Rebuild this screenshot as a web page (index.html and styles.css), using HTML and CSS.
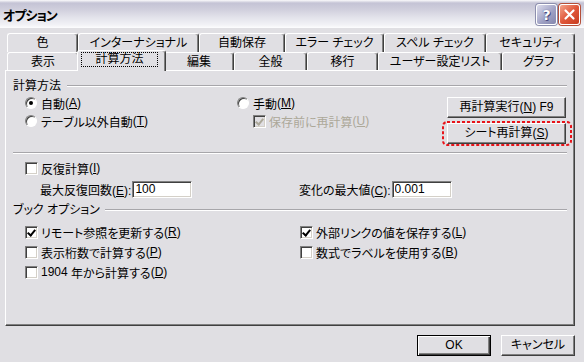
FILE: index.html
```html
<!DOCTYPE html>
<html lang="ja">
<head>
    <meta charset="UTF-8">
    <title>オプション</title>
    <link rel="stylesheet" href="styles.css">
</head>
<body>
    <div class="window">
        <div class="titlebar">
            <div class="title">オプション</div>
            <div class="ctrl help">?</div>
            <div class="ctrl close">
                <svg width="13" height="13" viewBox="0 0 13 13"><path d="M2.5 2.5 L10.5 10.5 M10.5 2.5 L2.5 10.5" stroke="#fff" stroke-width="2.2" stroke-linecap="round"/></svg>
            </div>
        </div>

        <div class="content">
            <!-- タブ -->
            <div class="tabs">
                <div class="tabrow back">
                    <div class="tab">色</div>
                    <div class="tab">インターナショナル</div>
                    <div class="tab">自動保存</div>
                    <div class="tab">エラー チェック</div>
                    <div class="tab">スペル チェック</div>
                    <div class="tab">セキュリティ</div>
                </div>
                <div class="tabrow front">
                    <div class="tab">表示</div>
                    <div class="tab active"><span class="focus">計算方法</span></div>
                    <div class="tab">編集</div>
                    <div class="tab">全般</div>
                    <div class="tab">移行</div>
                    <div class="tab">ユーザー設定リスト</div>
                    <div class="tab">グラフ</div>
                </div>
            </div>

            <div class="panel">
                <div class="legend"><span>計算方法</span></div>
                <div class="calc">
                    <div class="col col-auto">
                        <div class="opt"><span class="radio on"></span>自動<span class="key" lang="en">(<u>A</u>)</span></div>
                        <div class="opt"><span class="radio"></span>テーブル以外自動<span class="key" lang="en">(<u>T</u>)</span></div>
                    </div>
                    <div class="col col-manual">
                        <div class="opt"><span class="radio"></span>手動<span class="key" lang="en">(<u>M</u>)</span></div>
                        <div class="opt sub disabled"><span class="box checked"></span>保存前に再計算<span class="key" lang="en">(<u>U</u>)</span></div>
                    </div>
                    <div class="col col-btns">
                        <button class="btn wide">再計算実行<span class="key" lang="en">(<u>N</u>) F9</span></button>
                        <div class="marked">
                            <button class="btn wide">シート再計算<span class="key" lang="en">(<u>S</u>)</span></button>
                            <svg class="mark" width="130" height="25" viewBox="0 0 130 25"><rect x="1" y="1" width="128" height="23" rx="4" fill="none" stroke="#e8141a" stroke-width="2" stroke-dasharray="3 2"/></svg>
                        </div>
                    </div>
                </div>

                <div class="sep"></div>

                <div class="opt iter-check"><span class="box"></span>反復計算<span class="key" lang="en">(<u>I</u>)</span></div>
                <div class="iter">
                    <div class="field first"><label>最大反復回数<span class="key" lang="en">(<u>E</u>):</span></label><input class="input" type="text" value="100"></div>
                    <div class="field"><label>変化の最大値<span class="key" lang="en">(<u>C</u>):</span></label><input class="input" type="text" value="0.001"></div>
                </div>

                <div class="legend book-legend"><span>ブック オプション</span></div>
                <div class="book">
                    <div class="opt"><span class="box checked"></span>リモート参照を更新する<span class="key" lang="en">(<u>R</u>)</span></div>
                    <div class="opt"><span class="box checked"></span>外部リンクの値を保存する<span class="key" lang="en">(<u>L</u>)</span></div>
                    <div class="opt"><span class="box"></span>表示桁数で計算する<span class="key" lang="en">(<u>P</u>)</span></div>
                    <div class="opt"><span class="box"></span>数式でラベルを使用する<span class="key" lang="en">(<u>B</u>)</span></div>
                    <div class="opt"><span class="box"></span><span class="key" lang="en">1904</span>&nbsp;年から計算する<span class="key" lang="en">(<u>D</u>)</span></div>
                </div>
            </div>

            <div class="footer">
                <button class="btn default" lang="en">OK</button>
                <button class="btn">キャンセル</button>
            </div>
        </div>
    </div>
</body>
</html>
```

FILE: styles.css
```css
/* 全体 */
* {
    box-sizing: border-box;
}

body {
    margin: 0;
    font-family: "Liberation Sans", "Noto Sans CJK JP", sans-serif;
    font-size: 12px;
    font-feature-settings: "palt";
    text-autospace: no-autospace;
    color: #000;
    background: #e0dfe3;
}

.key {
    font-family: "Liberation Sans", sans-serif;
    font-feature-settings: normal;
}

.window {
    width: 584px;
    height: 362px;
    background: #e0dfe3;
    overflow: hidden;
}

/* タイトルバー */
.titlebar {
    height: 28px;
    display: flex;
    align-items: center;
    padding: 0 4px 0 3px;
    background: linear-gradient(to bottom, #fbfbfc 0, #c4c3d5 3px, #cfcedc 9px, #e2e2ea 17px, #f2f2f6 25px, #fdfdfe 28px);
}

.title {
    flex: 1;
    font-weight: bold;
    font-size: 13px;
    letter-spacing: -1px;
    padding-top: 1px;
}

.ctrl {
    width: 21px;
    height: 21px;
    margin-left: 2px;
    margin-top: 1px;
    border: 1px solid #fff;
    border-radius: 3px;
    box-shadow: 0 0 0 1px #8d8fae;
    display: flex;
    align-items: center;
    justify-content: center;
}

.help {
    background: linear-gradient(135deg, #dcdcec, #9c9ec2 60%, #8587ad);
    color: #fff;
    font-family: "DejaVu Sans", sans-serif;
    font-weight: bold;
    font-size: 14px;
    text-shadow: 0 0 1px #3c3f76, 1px 1px 0 #4b4e84;
}

.close {
    background: linear-gradient(135deg, #f3a58c, #e0573a 50%, #c73c1f);
    box-shadow: 0 0 0 1px #b4503a;
}

/* 本体 */
.content {
    padding: 5px 9px 0 5px;
}

.tabs {
    margin-left: 2px;
}

.tabrow {
    display: grid;
}

.back {
    grid-template-columns: 71px 121px 86px 99px 102px 89px;
    height: 19px;
}

.front {
    grid-template-columns: 72px 85px 70px 73px 71px 124px 73px;
    height: 18px;
}

.tab {
    background: #e0dfe3;
    border-top: 1px solid #fff;
    border-left: 1px solid #fff;
    border-right: 1px solid #404040;
    border-radius: 3px 3px 0 0;
    box-shadow: inset -1px 0 #808080;
    text-align: center;
    line-height: 16px;
    padding-top: 1px;
}

.back .tab {
    height: 19px;
}

.front .tab {
    height: 18px;
    line-height: 17px;
}

.tab.active {
    position: relative;
    height: 21px;
    margin: -2px -2px -1px -2px;
    padding-top: 1px;
    line-height: 13px;
}

.focus {
    display: inline-block;
    border: 1px dotted #000;
    padding: 0 13px;
    line-height: 13px;
    margin-right: 4px;
}

/* パネル */
.panel {
    height: 256px;
    border: 1px solid;
    border-color: #fff #404040 #404040 #fff;
    box-shadow: inset -1px -1px #808080;
    padding: 8px 7px 0 7px;
}

.legend {
    display: flex;
    align-items: center;
    height: 14px;
    line-height: 14px;
}

.legend::after {
    content: "";
    flex: 1;
    margin-left: 6px;
    border-top: 1px solid #a7a6aa;
    border-bottom: 1px solid #fff;
}

.calc {
    display: flex;
    height: 54px;
    padding-left: 12px;
}

.col-auto {
    width: 212px;
    padding-top: 1px;
}

.col-manual {
    width: 210px;
    padding-top: 1px;
}

.col-btns {
    width: 119px;
    padding-top: 4px;
    display: flex;
    flex-direction: column;
    gap: 5px;
}

.opt {
    display: flex;
    align-items: center;
    height: 18px;
    white-space: nowrap;
}

.opt > .box,
.opt > .radio {
    margin-right: 3px;
}

.opt.sub {
    padding-left: 16px;
}

.disabled {
    color: #aca899;
}

/* チェックボックス・ラジオ */
.box,
.radio {
    flex: none;
    width: 13px;
    height: 13px;
    background: #fff;
    border: 1px solid;
    border-color: #808080 #fff #fff #808080;
    box-shadow: inset 1px 1px #404040, inset -1px -1px #d4d0c8;
    position: relative;
}

.opt > .radio {
    width: 12px;
    height: 12px;
    margin-right: 4px;
    border-radius: 50%;
    box-shadow: inset 1px 1px #404040;
}

.radio.on::after {
    content: "";
    position: absolute;
    left: 3px;
    top: 3px;
    width: 4px;
    height: 4px;
    border-radius: 50%;
    background: #000;
}

.box.checked::after {
    content: "";
    position: absolute;
    left: 3px;
    top: 1px;
    width: 3px;
    height: 6px;
    border: solid #000;
    border-width: 0 2px 2px 0;
    transform: rotate(40deg);
}

.disabled .box {
    background: #e0dfe3;
}

.disabled .box.checked::after {
    border-color: #aca899;
}

/* ボタン */
.btn {
    height: 21px;
    padding: 0;
    background: #e0dfe3;
    border: 1px solid;
    border-color: #fff #404040 #404040 #fff;
    box-shadow: inset -1px -1px #808080;
    font: inherit;
    color: #000;
    line-height: 17px;
}

.btn.wide {
    width: 119px;
}

.btn.default {
    border: 1px solid #000;
    box-shadow: inset 1px 1px #fff, inset -1px -1px #404040, inset -2px -2px #808080;
}

.marked {
    position: relative;
    height: 21px;
}

.mark {
    position: absolute;
    left: -5px;
    top: -2px;
}

.sep {
    margin-top: 5px;
    border-top: 1px solid #a7a6aa;
    border-bottom: 1px solid #fff;
}

/* 反復計算 */
.iter-check {
    margin-top: 5px;
    padding-left: 12px;
}

.iter {
    display: grid;
    grid-template-columns: 286px 1fr;
    margin-top: 2px;
    height: 20px;
}

.field {
    display: flex;
    align-items: center;
    gap: 1px;
    white-space: nowrap;
}

.field.first {
    padding-left: 27px;
}

.input {
    width: 60px;
    height: 17px;
    padding: 0 2px;
    font: inherit;
    background: #fff;
    border: 1px solid;
    border-color: #808080 #fff #fff #808080;
    box-shadow: inset 1px 1px #404040, inset -1px -1px #d4d0c8;
    outline: none;
}

.book-legend {
    margin-top: 4px;
}

.book-legend::after {
    margin-left: 5px;
}

.book {
    display: grid;
    grid-template-columns: 275px 1fr;
    grid-auto-rows: 18px;
    row-gap: 2px;
    margin-top: 6px;
    padding-left: 12px;
}

/* フッター */
.footer {
    display: flex;
    justify-content: flex-end;
    gap: 10px;
    margin-top: 9px;
}

.footer .btn {
    width: 74px;
}
```
